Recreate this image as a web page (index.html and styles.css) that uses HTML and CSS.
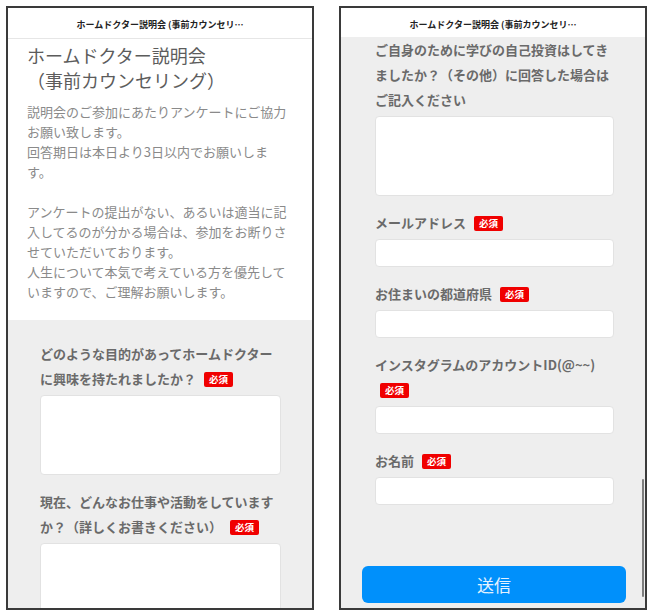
FILE: index.html
```html
<!DOCTYPE html>
<html lang="ja">
<head>
<meta charset="utf-8">
<title>ホームドクター説明会（事前カウンセリング）</title>
<link rel="stylesheet" href="styles.css">
</head>
<body>
<div class="screens">
  <section class="phone">
    <header class="bar">ホームドクター説明会 (事前カウンセリ…</header>
    <div class="intro">
      <h1 class="title">ホームドクター説明会<br>（事前カウンセリング）</h1>
      <p class="lead">説明会のご参加にあたりアンケートにご協力お願い致します。<br>回答期日は本日より3日以内でお願いします。<br><br>アンケートの提出がない、あるいは適当に記入してるのが分かる場合は、参加をお断りさせていただいております。<br>人生について本気で考えている方を優先していますので、ご理解お願いします。</p>
    </div>
    <form class="form form-top">
      <div class="field">
        <label class="label">どのような目的があってホームドクターに興味を持たれましたか？ <span class="req">必須</span></label>
        <textarea class="area"></textarea>
      </div>
      <div class="field">
        <label class="label">現在、どんなお仕事や活動をしていますか？（詳しくお書きください） <span class="req">必須</span></label>
        <textarea class="area"></textarea>
      </div>
    </form>
  </section>

  <section class="phone">
    <header class="bar">ホームドクター説明会 (事前カウンセリ…</header>
    <form class="form form-scrolled">
      <div class="field first">
        <label class="label">ご自身のために学びの自己投資はしてきましたか？（その他）に回答した場合はご記入ください</label>
        <textarea class="area"></textarea>
      </div>
      <div class="field">
        <label class="label">メールアドレス <span class="req">必須</span></label>
        <input class="box" type="text">
      </div>
      <div class="field">
        <label class="label">お住まいの都道府県 <span class="req">必須</span></label>
        <input class="box" type="text">
      </div>
      <div class="field">
        <label class="label">インスタグラムのアカウントID(@~~) <span class="req">必須</span></label>
        <input class="box" type="text">
      </div>
      <div class="field">
        <label class="label">お名前 <span class="req">必須</span></label>
        <input class="box" type="text">
      </div>
      <button class="submit" type="button">送信</button>
    </form>
    <div class="scrollbar"></div>
  </section>
</div>
</body>
</html>
```

FILE: styles.css
```css
* { box-sizing: border-box; }

html, body {
  margin: 0;
  padding: 0;
  background: #ffffff;
}

body {
  font-family: "Noto Sans CJK JP", "Noto Sans", sans-serif;
}

.screens {
  display: flex;
  gap: 25px;
  padding: 6px;
}

.phone {
  position: relative;
  width: 308px;
  height: 604px;
  border: 2px solid #3a3a3a;
  overflow: hidden;
  display: flex;
  flex-direction: column;
  background: #eeeeee;
}

.bar {
  flex: none;
  height: 31px;
  border-bottom: 1px solid #e6e6e6;
  background: #ffffff;
  display: flex;
  align-items: center;
  justify-content: center;
  font-size: 9px;
  font-weight: 700;
  color: #222222;
  padding-top: 2px;
  white-space: nowrap;
}

.intro {
  flex: none;
  background: #ffffff;
  padding: 4px 24px 18px 19px;
}

.title {
  margin: 0;
  font-size: 18px;
  line-height: 25px;
  font-weight: 400;
  color: #5c5c5c;
}

.lead {
  margin: 9px 0 0 0;
  font-size: 13px;
  line-height: 20px;
  color: #8a8a8a;
}

.form {
  flex: 1;
  display: flex;
  flex-direction: column;
  background: #eeeeee;
  padding: 0 31px 0 32px;
}

.form-top {
  padding-top: 21px;
}

.form-scrolled {
  padding-left: 34px;
  margin-top: -2px;
}

.field {
  display: flex;
  flex-direction: column;
  margin-top: 14px;
}

.field:first-child {
  margin-top: 0;
}

.label {
  font-size: 13px;
  line-height: 25px;
  font-weight: 700;
  color: #6a6a6a;
}

.req {
  display: inline-block;
  margin-left: 5px;
  padding: 0 5px;
  height: 15px;
  line-height: 15px;
  font-size: 9.5px;
  font-weight: 700;
  color: #ffffff;
  background: #f00000;
  border-radius: 2px;
  vertical-align: 1px;
}

.area,
.box {
  display: block;
  width: 100%;
  margin: 4px 0 0 0;
  background: #ffffff;
  border: 1px solid #e2e2e2;
  border-radius: 4px;
  font-family: inherit;
  outline: none;
}

.area {
  height: 80px;
  resize: none;
}

.box {
  height: 28px;
}

.submit {
  display: block;
  margin: 61px -12px 0 -13px;
  height: 37px;
  border: none;
  border-radius: 6px;
  background: #0090fb;
  color: #e4f2ff;
  font-family: inherit;
  font-size: 17px;
}

.scrollbar {
  position: absolute;
  right: 1px;
  top: 471px;
  width: 2px;
  height: 118px;
  border-radius: 1px;
  background: #7d7d7d;
}
```
